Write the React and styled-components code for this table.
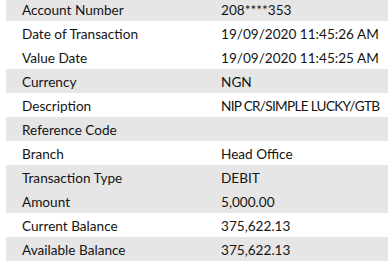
import styled, { createGlobalStyle } from "styled-components";

const GlobalStyle = createGlobalStyle`
  html, body {
    margin: 0;
    padding: 0;
    background: #ffffff;
  }
`;

const Style = {
  Wrapper: styled.div`
    width: 388px;
    height: 264px;
    overflow: hidden;
    background: #ffffff;
  `,
  Table: styled.div`
    margin-top: -3px;
    margin-left: 6px;
    width: 382px;
    display: flex;
    flex-direction: column;
  `,
  Row: styled.div`
    height: 24px;
    display: grid;
    grid-template-columns: 215px 1fr;
    align-items: center;
    background: ${(p) => (p.$shaded ? "#e6e6e6" : "#ffffff")};
    font-family: Lato, "Liberation Sans", sans-serif;
    font-size: 13.6px;
    color: #141414;
    padding-top: 2px;
    box-sizing: border-box;
  `,
  Label: styled.div`
    padding-left: 16px;
    white-space: nowrap;
  `,
  Value: styled.div`
    white-space: nowrap;
    letter-spacing: ${(p) => (p.$condensed ? "-0.7px" : "0")};
  `,
};

const rows = [
  ["Account Number", "208****353", true],
  ["Date of Transaction", "19/09/2020 11:45:26 AM", false],
  ["Value Date", "19/09/2020 11:45:25 AM", false],
  ["Currency", "NGN", true],
  ["Description", "NIP CR/SIMPLE LUCKY/GTB", false, true],
  ["Reference Code", "", true],
  ["Branch", "Head Office", false],
  ["Transaction Type", "DEBIT", true],
  ["Amount", "5,000.00", true],
  ["Current Balance", "375,622.13", false],
  ["Available Balance", "375,622.13", true],
];

const App = () => {
  return (
    <Style.Wrapper>
      <GlobalStyle />
      <Style.Table>
        {rows.map(([label, value, shaded, condensed]) => (
          <Style.Row key={label} $shaded={shaded}>
            <Style.Label>{label}</Style.Label>
            <Style.Value $condensed={condensed}>{value}</Style.Value>
          </Style.Row>
        ))}
      </Style.Table>
    </Style.Wrapper>
  );
};

export default App;
